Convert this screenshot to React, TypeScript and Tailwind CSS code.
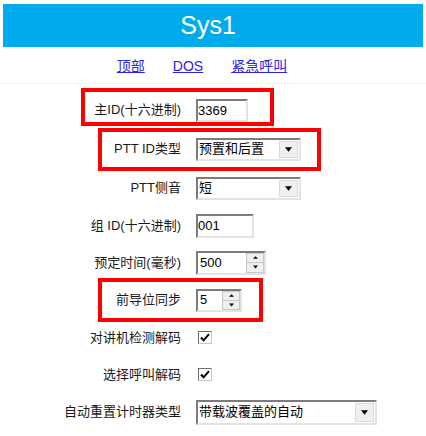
import type { ReactNode } from "react";

const font = { fontFamily: '"Liberation Sans", Arial, "Noto Sans CJK SC", sans-serif' };

const inset =
  "border-2 border-t-[#7c7c7c] border-l-[#7c7c7c] border-r-[#e3e3e3] border-b-[#e3e3e3] bg-white";

const Down = ({ size = 7 }: { size?: number }) => (
  <svg width={size} height={Math.ceil(size / 2) + 1} viewBox="0 0 8 5">
    <path d="M0 0h8L4 5z" fill="#000" />
  </svg>
);

const Up = () => (
  <svg width="5" height="3" viewBox="0 0 6 3">
    <path d="M0 3h6L3 0z" fill="#000" />
  </svg>
);

const TextBox = ({ value, w, h }: { value: string; w: string; h: string }) => (
  <div className={`${inset} ${w} ${h} flex items-center text-[13px] text-black leading-none`}>
    {value}
  </div>
);

const Select = ({ value, w, h }: { value: string; w: string; h: string }) => (
  <div className={`${inset} ${w} ${h} flex items-stretch text-[13px] text-black`}>
    <div className="flex-1 flex items-center pl-[1px]">{value}</div>
    <div className="w-[19px] m-[1px] bg-[#efefef] border border-[#dadada] flex items-center justify-center">
      <Down />
    </div>
  </div>
);

const Spin = ({ value, w, h }: { value: string; w: string; h: string }) => (
  <div className={`${inset} ${w} ${h} flex items-stretch text-[13px] text-black`}>
    <div className="flex-1 flex items-center pl-[2px]">{value}</div>
    <div className="w-[18px] flex flex-col">
      <div className="flex-1 bg-[#efefef] border border-[#c8c8c8] flex items-center justify-center">
        <Up />
      </div>
      <div className="flex-1 bg-[#efefef] border border-[#c8c8c8] border-t-0 flex items-center justify-center">
        <Down size={5} />
      </div>
    </div>
  </div>
);

const Check = () => (
  <div className="ml-[2px] w-[14px] h-[13px] border border-t-[#6f6f6f] border-l-[#6f6f6f] border-r-[#c9c9c9] border-b-[#c9c9c9] bg-white flex items-center justify-center">
    <svg width="10" height="9" viewBox="0 0 10 9">
      <path d="M1 4.5l2.6 2.8L9 1.2" fill="none" stroke="#000" strokeWidth="2" />
    </svg>
  </div>
);

const Row = ({
  label,
  h,
  children,
  box,
}: {
  label: string;
  h: string;
  children: ReactNode;
  box?: string;
}) => (
  <div className={`relative flex items-center ${h}`}>
    <div className="w-[181px] text-right text-[13px] text-[#1a1a1a] whitespace-nowrap">{label}</div>
    <div className="ml-[15px]">{children}</div>
    {box && <div className={`absolute border-4 border-[#ff0000] pointer-events-none ${box}`} />}
  </div>
);

export default function App() {
  return (
    <div className="w-[426px] h-[436px] bg-white overflow-hidden" style={font}>
      {/* title bar */}
      <div className="mx-[3px] mt-[4px] h-[43px] bg-[#00abec] flex items-center justify-center pr-[10px] text-white text-[25px]">
        Sys1
      </div>

      {/* nav links */}
      <div className="h-[37px] pt-[3px] pr-[22px] flex items-center justify-center gap-[28px] text-[14px] border-b border-[#f3f3f3]">
        <a href="#" className="text-[#2d22e6] underline">顶部</a>
        <a href="#" className="text-[#2d22e6] underline">DOS</a>
        <a href="#" className="text-[#2d22e6] underline">紧急呼叫</a>
      </div>

      {/* settings */}
      <div className="pt-[7px] flex flex-col">
        <Row label="主ID(十六进制)" h="h-[38px]" box="left-[81px] top-[-3px] w-[193px] h-[38px]">
          <TextBox value="3369" w="w-[52px]" h="h-[23px]" />
        </Row>
        <Row label="PTT ID类型" h="h-[40px]" box="left-[98px] top-[-1px] w-[223px] h-[43px]">
          <Select value="预置和后置" w="w-[105px]" h="h-[23px]" />
        </Row>
        <Row label="PTT侧音" h="h-[38px]">
          <Select value="短" w="w-[105px]" h="h-[23px]" />
        </Row>
        <Row label="组 ID(十六进制)" h="h-[37px]">
          <TextBox value="001" w="w-[58px]" h="h-[24px]" />
        </Row>
        <Row label="预定时间(毫秒)" h="h-[37px]">
          <Spin value="500" w="w-[70px]" h="h-[24px]" />
        </Row>
        <Row label="前导位同步" h="h-[38px]" box="left-[98px] top-[-3px] w-[165px] h-[44px]">
          <Spin value="5" w="w-[46px]" h="h-[23px]" />
        </Row>
        <Row label="对讲机检测解码" h="h-[37px]">
          <Check />
        </Row>
        <Row label="选择呼叫解码" h="h-[37px]">
          <Check />
        </Row>
        <Row label="自动重置计时器类型" h="h-[38px]">
          <Select value="带载波覆盖的自动" w="w-[181px]" h="h-[25px]" />
        </Row>
      </div>
    </div>
  );
}
